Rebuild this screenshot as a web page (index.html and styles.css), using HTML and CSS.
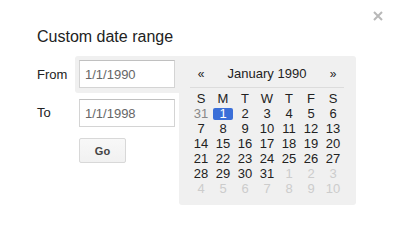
FILE: index.html
```html
<!DOCTYPE html>
<html>
<head>
<meta charset="utf-8">
<link rel="stylesheet" href="styles.css">
</head>
<body>
<div class="dialog">
  <button class="close" aria-label="Close">
    <svg width="10" height="10" viewBox="0 0 10 10"><path d="M1 1 L9 9 M9 1 L1 9" stroke="#b8b8b8" stroke-width="2" fill="none"/></svg>
  </button>
  <h1 class="title">Custom date range</h1>
  <div class="main">
    <div class="fields">
      <div class="row">
        <span class="label">From</span>
        <div class="active-field"><input class="date-input" type="text" value="1/1/1990"></div>
      </div>
      <div class="row row-to">
        <span class="label">To</span>
        <div class="plain-field"><input class="date-input" type="text" value="1/1/1998"></div>
      </div>
      <button class="go">Go</button>
    </div>
    <div class="calendar">
      <div class="cal-head">
        <span class="nav">«</span>
        <span class="month">January 1990</span>
        <span class="nav">»</span>
      </div>
      <div class="grid">
        <span class="dow">S</span><span class="dow">M</span><span class="dow">T</span><span class="dow">W</span><span class="dow">T</span><span class="dow">F</span><span class="dow">S</span>
        <span class="day prev">31</span><span class="day"><b class="sel">1</b></span><span class="day">2</span><span class="day">3</span><span class="day">4</span><span class="day">5</span><span class="day">6</span>
        <span class="day">7</span><span class="day">8</span><span class="day">9</span><span class="day">10</span><span class="day">11</span><span class="day">12</span><span class="day">13</span>
        <span class="day">14</span><span class="day">15</span><span class="day">16</span><span class="day">17</span><span class="day">18</span><span class="day">19</span><span class="day">20</span>
        <span class="day">21</span><span class="day">22</span><span class="day">23</span><span class="day">24</span><span class="day">25</span><span class="day">26</span><span class="day">27</span>
        <span class="day">28</span><span class="day">29</span><span class="day">30</span><span class="day">31</span><span class="day next">1</span><span class="day next">2</span><span class="day next">3</span>
        <span class="day next">4</span><span class="day next">5</span><span class="day next">6</span><span class="day next">7</span><span class="day next">8</span><span class="day next">9</span><span class="day next">10</span>
      </div>
    </div>
  </div>
</div>
</body>
</html>
```
FILE: styles.css
```css
html, body {
  margin: 0;
  padding: 0;
  background: #fff;
}
body {
  font-family: "Liberation Sans", Arial, sans-serif;
  color: #222;
  width: 397px;
  height: 232px;
  overflow: hidden;
}
.dialog {
  position: relative;
  padding: 28px 0 0 37px;
}
.close {
  position: absolute;
  top: 10px;
  left: 372px;
  width: 11px;
  height: 11px;
  padding: 0;
  margin: 0;
  border: 0;
  background: none;
  display: flex;
  align-items: center;
  justify-content: center;
}
.title {
  margin: 0 0 10px 0;
  font-size: 16px;
  line-height: 18px;
  font-weight: normal;
  color: #222;
}
.main {
  display: flex;
  align-items: flex-start;
}
.fields {
  width: 142px;
  display: flex;
  flex-direction: column;
}
.row {
  display: flex;
  align-items: center;
}
.row-to {
  margin-top: 6px;
}
.label {
  width: 38px;
  font-size: 13px;
  line-height: 16px;
}
.active-field {
  background: #f0f0f0;
  padding: 4px 4px 5px 4px;
  border-radius: 3px 0 0 3px;
}
.plain-field {
  padding-left: 4px;
}
.date-input {
  display: block;
  box-sizing: border-box;
  width: 96px;
  height: 28px;
  margin: 0;
  padding: 0 5px;
  border: 1px solid #d4d4d4;
  border-top-color: #c0c0c0;
  background: #fff;
  font-family: "Liberation Sans", Arial, sans-serif;
  font-size: 13px;
  color: #666;
  outline: none;
}
.go {
  margin: 11px 0 0 42px;
  width: 47px;
  height: 25px;
  box-sizing: border-box;
  padding: 0;
  border: 1px solid #d8d8d8;
  border-radius: 2px;
  background: linear-gradient(#f8f8f8, #f1f1f1);
  font-family: "Liberation Sans", Arial, sans-serif;
  font-size: 11px;
  font-weight: bold;
  color: #444;
}
.calendar {
  box-sizing: border-box;
  width: 177px;
  height: 149px;
  background: #f0f0f0;
  border-radius: 0 3px 3px 3px;
  padding: 8px 12px 9px 11px;
  font-size: 13px;
}
.cal-head {
  display: grid;
  grid-template-columns: 22px 1fr 22px;
  line-height: 20px;
  padding-bottom: 3px;
  border-bottom: 1px solid #dcdcdc;
  text-align: center;
  color: #222;
}
.nav {
  font-size: 12px;
}
.grid {
  margin-top: 3px;
  display: grid;
  grid-template-columns: repeat(7, 22px);
  grid-auto-rows: 15px;
  text-align: center;
  line-height: 15px;
}
.dow, .day {
  display: flex;
  align-items: center;
  justify-content: center;
}
.prev {
  color: #888;
}
.next {
  color: #ccc;
}
.sel {
  display: block;
  width: 20px;
  height: 12px;
  line-height: 12px;
  background: #3b6fd8;
  color: #fff;
  font-weight: normal;
  border-radius: 2px;
}
```
